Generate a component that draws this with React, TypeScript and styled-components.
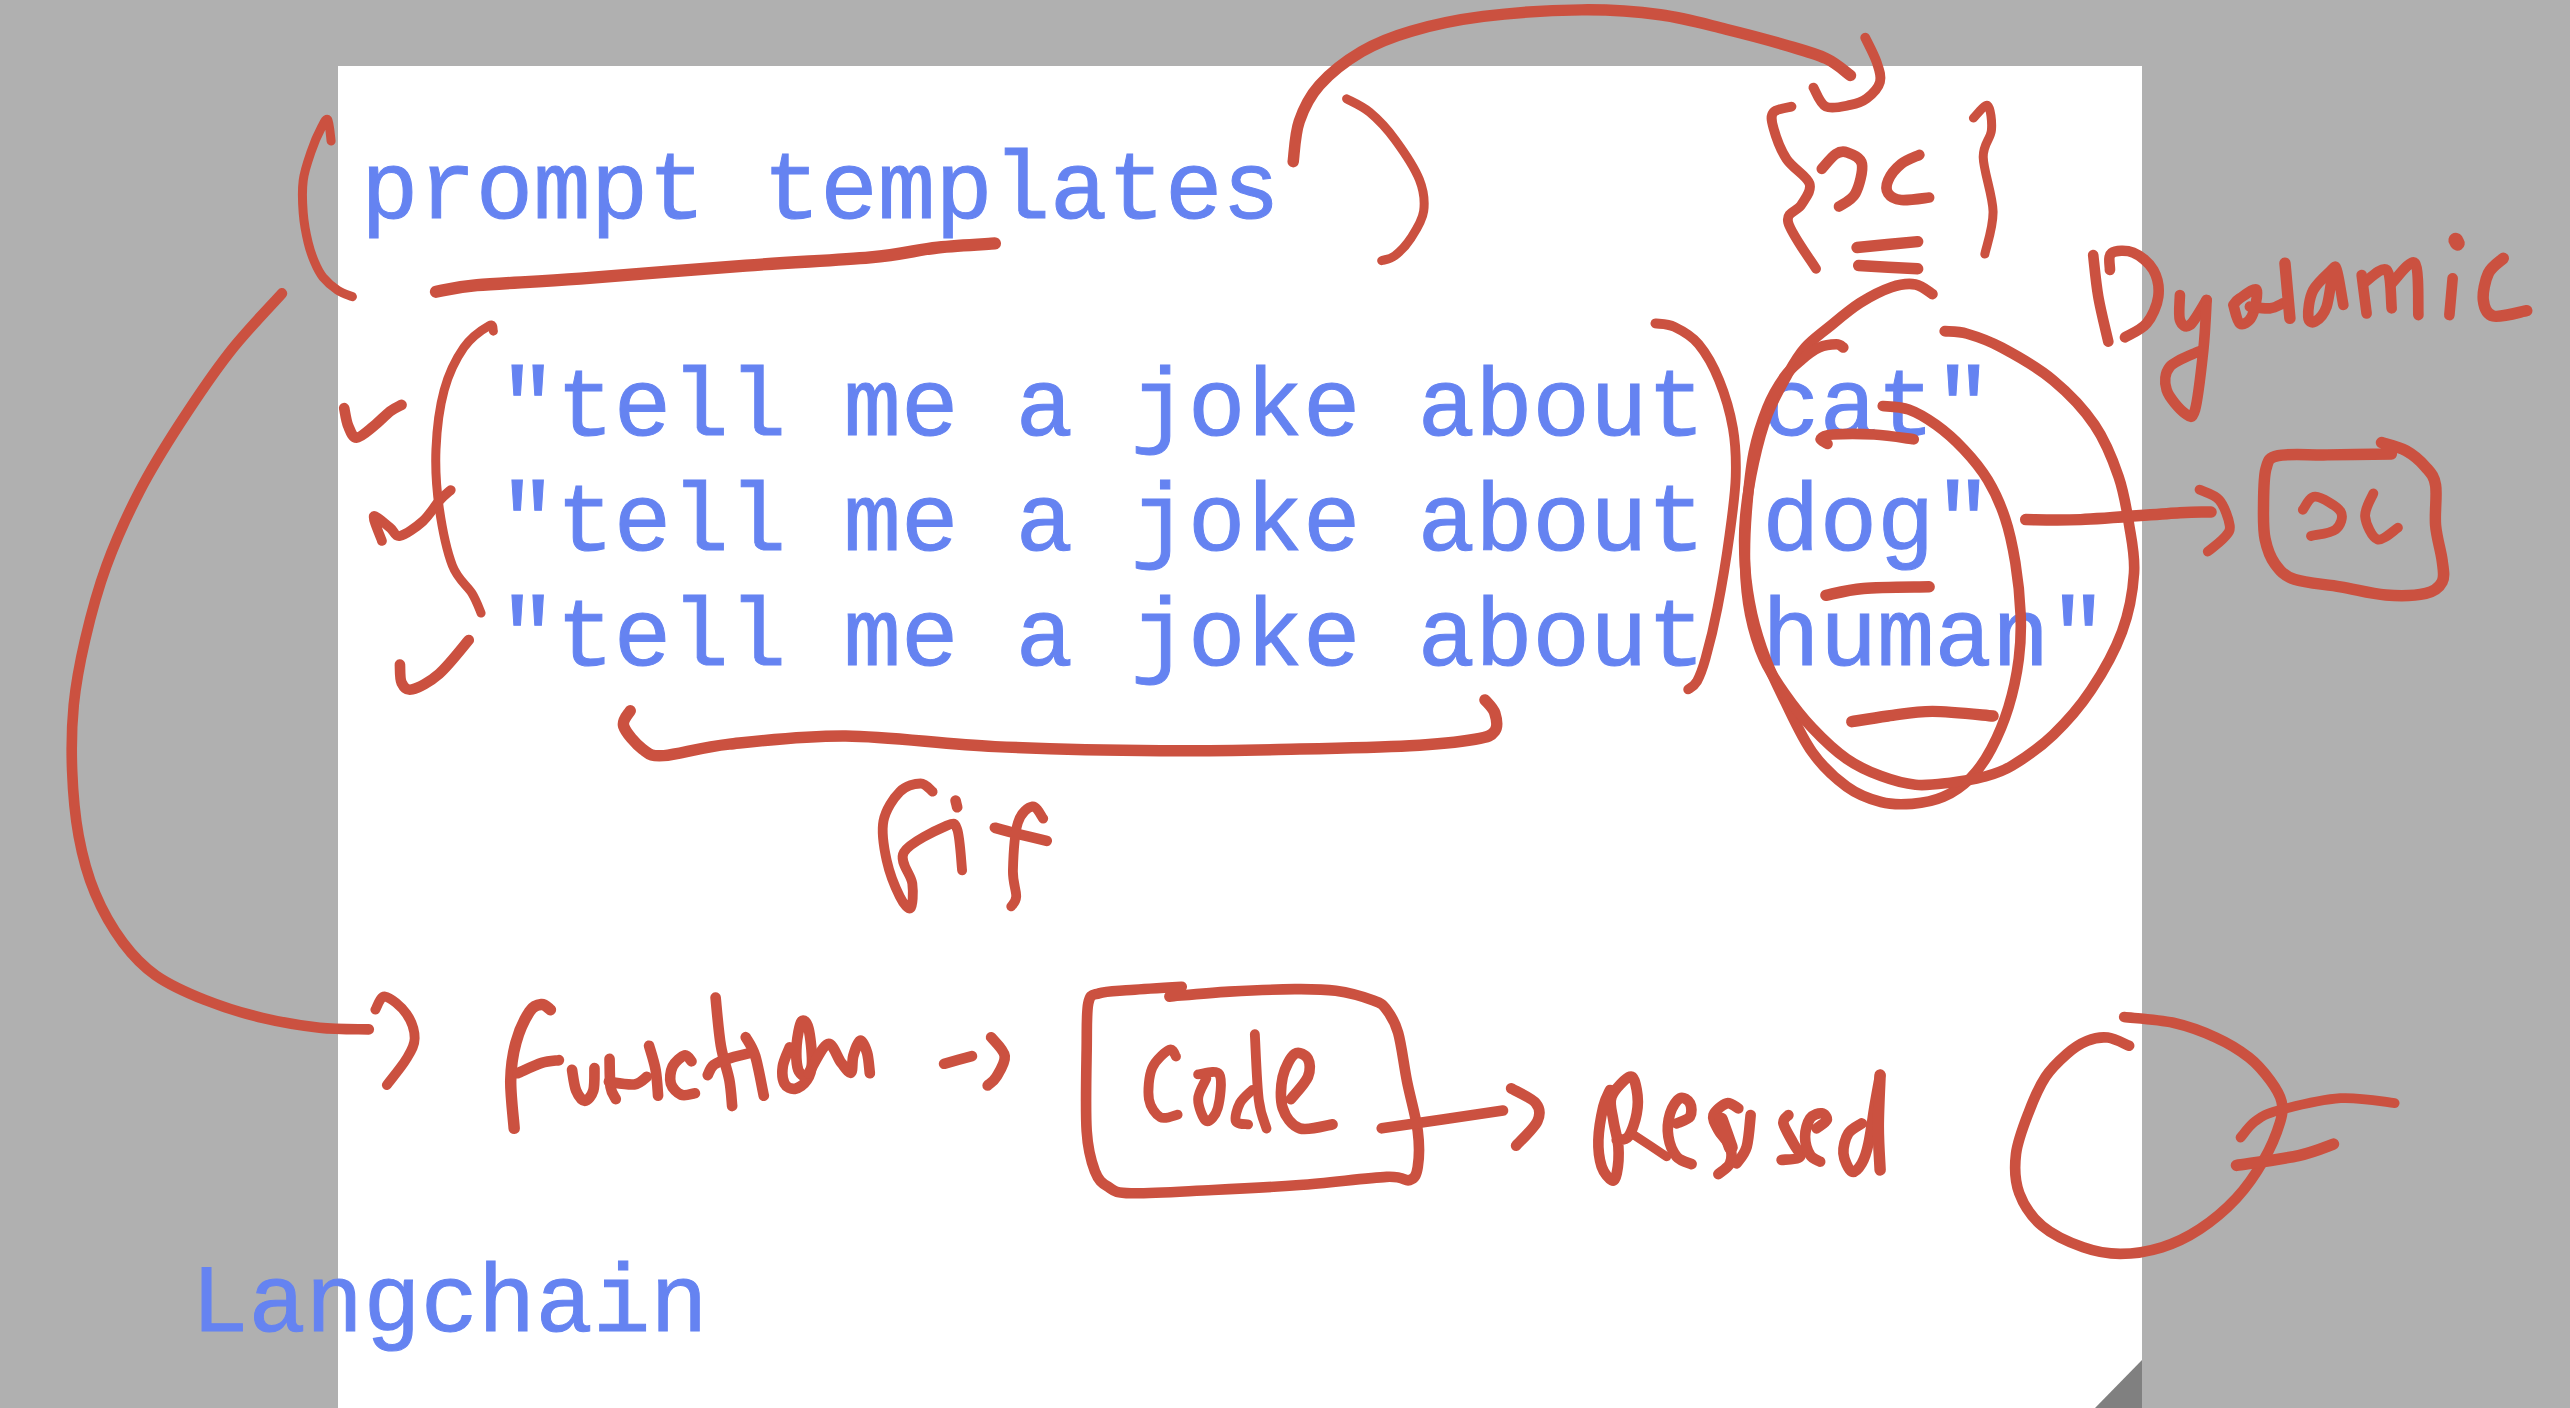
import React from 'react';
import styled, { createGlobalStyle } from 'styled-components';

const GlobalStyle = createGlobalStyle`
  html, body { margin: 0; padding: 0; background: #b0b0b0; }
`;

type Stroke = { w: number; pts: number[] };

// pen strokes, in 1568x859 coordinates
const strokes: Stroke[] = [
  // left paren and underline of the title
  { w: 5.5, pts: [202,86, 200,73, 196,78, 190,92, 185,110, 185,130, 188,148, 192,160, 197,169, 206,177, 215,181] },
  { w: 7.5, pts: [266,178, 291,174, 354,170, 455,162, 531,157, 572,151, 607,148.5] },
  // long arrow on the left
  { w: 6.5, pts: [172,179, 140,215, 110,258, 85,300, 65,345, 52,390, 45,430, 44,470, 48,510, 58,545, 75,575, 95,595, 125,610, 160,621, 195,627, 225,628] },
  { w: 6, pts: [229,616, 235,608, 248,618.5, 253,633.5, 248,646, 236,662] },
  // checks
  { w: 6.5, pts: [210,249, 212.5,260, 217.6,267, 228,260, 238,251, 245,247] },
  { w: 6, pts: [233,330, 228,315, 238,322, 244,327, 258,318, 268,305.5, 275,299] },
  { w: 6.5, pts: [244,405.5, 245,416.5, 251.5,420.6, 268,411, 286,390.5] },
  { w: 5.5, pts: [301,202, 298.5,198.6, 283,212, 271,238, 266,274, 268,310, 276,345, 288,362, 293.5,374] },
  // brace under the jokes
  { w: 7, pts: [384.5,433.6, 380.5,443, 392,457, 405,461, 445,454, 516,449, 607,455.5, 708,458, 793,457, 860,455, 900,451, 912,446, 912,435, 906,427] },
  // Fif
  { w: 6, pts: [569,483, 561.7,478, 549,483, 539,501, 541,525, 549,547, 555.6,554, 556.6,539, 551.5,520, 577,504, 584,506, 587,531] },
  { w: 6.5, pts: [583,488.4, 584,492.5] },
  { w: 6.5, pts: [607,505, 622,509, 638.6,513] },
  { w: 6, pts: [636.5,499.4, 630,492, 621,502, 618,531, 620,547, 617,553] },
  // Function ->
  { w: 7, pts: [335.8,616, 330.5,612.8, 323.2,617, 314.8,636, 311.6,659, 313.7,688.4] },
  { w: 6.5, pts: [315.8,654.8, 330.5,648.5, 341,646.8] },
  { w: 6.5, pts: [349,652.7, 351.5,665.3, 356.8,671.6, 362,665.3, 362.7,651.7] },
  { w: 6.5, pts: [371.9,646, 372.5,663.2, 375.7,670.6] },
  { w: 6.5, pts: [371.5,660, 387,661.6, 394.6,657] },
  { w: 6.5, pts: [396,638, 400,652.7, 401.5,668.5] },
  { w: 6.5, pts: [421.9,647.5, 417.7,643.9, 410.4,650.6, 409.3,661.1, 415.6,667.9, 424,667] },
  { w: 6.5, pts: [436.6,608.6, 439.8,638, 445,659, 446.7,674.8] },
  { w: 6.5, pts: [431.8,655.9, 435.6,649.6, 446,645.4, 458.7,642.2] },
  { w: 6.5, pts: [455,632.8, 460.8,644.3, 466,668.5] },
  { w: 6.5, pts: [481.8,639, 477.6,650.6, 478.6,661, 485,664.3, 492.3,659, 495.4,648.5, 493.3,627.5, 489,623.3, 486,638, 487,652.7, 492.3,658] },
  { w: 6.5, pts: [493.3,654.8, 505,637, 513.3,648.5, 519.2,654.4, 520.6,644.3, 524.9,634.9, 529,642.2, 530.7,654.8] },
  { w: 6.5, pts: [576,649, 593,644.3] },
  { w: 6.5, pts: [604.7,632.8, 613,644.3, 607.9,657, 602.6,662.2] },
  // code box
  { w: 6.5, pts: [721,602, 690,604, 670.5,606, 664,612, 663,640, 663,690, 668,714.5, 676,724, 690,728, 740,726, 793,723, 846,718, 860,720, 865,712, 865,690, 858.5,660, 853,630, 846,616, 838,610.4, 815,604.5, 790,603.5, 750,605, 713.5,608] },
  { w: 6, pts: [717.5,644.6, 713.5,640.5, 703,651.5, 701,670.6, 708,681.6, 718.5,680] },
  { w: 6, pts: [731,655.5, 744,655.5, 743,676, 736,684, 731,670.6, 736,658] },
  { w: 6, pts: [765.6,631, 768,671, 772.7,688.5] },
  { w: 6, pts: [764,665, 756.5,673, 754,684, 761.5,686] },
  { w: 6.5, pts: [787.6,670.6, 798,657, 798,646, 790,643, 782.6,657, 782.6,676, 793,688.4, 813,686] },
  { w: 6.5, pts: [843,688.4, 917,677.5] },
  { w: 6.5, pts: [922,664, 937,673, 938,684, 925,699] },
  // Ressed
  { w: 6.5, pts: [982.3,665, 978.2,675.2, 975.2,695.5, 977.2,711.8, 983.3,720, 986.4,715.9, 987.4,699.6, 984.3,683.3, 983.3,669, 994.5,656.9, 998.6,665, 998.6,679.2, 993.5,693.5, 986.4,695.5] },
  { w: 5.5, pts: [995.5,691.5, 1016.9,705.7] },
  { w: 6.5, pts: [1023,685.4, 1031.1,681.3, 1031.1,673.1, 1025,670, 1019,679.2, 1017.9,693.5, 1023,705.7, 1032.1,710.2] },
  { w: 6.5, pts: [1060.6,676.2, 1053.5,673.1, 1045.4,680.3, 1048.4,689.4, 1055.5,699.6, 1055.5,709.8, 1048.4,716.3] },
  { w: 6.5, pts: [1068.1,680.3, 1065.7,699.6, 1059.6,709.8] },
  { w: 8.5, pts: [1050,683, 1056,700] },
  { w: 6.5, pts: [1091.1,680.3, 1088.1,685.4, 1094.2,697.6, 1098.2,705.7, 1087,707.7] },
  { w: 6.5, pts: [1108.4,688.4, 1114.5,683.3, 1111.5,679.2, 1104.4,682.3, 1101.3,693.5, 1104.4,704.7, 1110.5,708.7] },
  { w: 6.5, pts: [1135.9,685.4, 1127.7,691.5, 1124.7,703.7, 1129.8,714.8, 1135.9,709.8, 1140,697.6, 1144,673.1, 1147.1,655.9] },
  { w: 7, pts: [1147.1,655.9, 1146,687.4, 1147.1,713.8] },
  // circle and cross on the bottom right
  { w: 6.5, pts: [1299,638, 1286,633, 1273.4,635, 1261,643, 1248,657, 1238,678, 1230,704, 1232,728, 1246,748, 1271,761, 1293.6,765, 1319,761, 1342,750, 1364.5,731, 1381,708, 1391,685, 1392,672, 1385,659, 1372,645, 1352,633, 1326,624, 1296,620.5] },
  { w: 6, pts: [1367,694, 1376,684, 1390,677.5, 1428,670, 1461,673] },
  { w: 7, pts: [1364.5,711, 1402.4,705, 1423.7,698] },
  // top arc and paren
  { w: 7, pts: [789,98.6, 792.7,74, 805,52, 830.7,31.5, 861,19, 905,10, 965,6, 1013,9, 1053,17.8, 1089,27.4, 1114,35.6, 1129,46] },
  { w: 5.5, pts: [821.6,60.3, 835.7,68.5, 851,85, 866,109.6, 868.6,128.8, 861,145, 851,156, 843,159] },
  // {x} =
  { w: 6, pts: [1138,23, 1145,38, 1147,50, 1139,60, 1129,64, 1114,65, 1106.4,53.4] },
  { w: 6, pts: [1093,65, 1082,68.5, 1082,78, 1090,97, 1104,112, 1099,125, 1091,135.6, 1108,164] },
  { w: 6.5, pts: [1111.5,103, 1120,94, 1127,93, 1136,100, 1132,118, 1122,126] },
  { w: 6.5, pts: [1171,94.5, 1160,100, 1152,110, 1152,118, 1160,122, 1177,120.5] },
  { w: 5.5, pts: [1204,72, 1212.7,64.4, 1215,79.5, 1210,96, 1216,129, 1211,155] },
  { w: 7, pts: [1133,151, 1170,147.4] },
  { w: 7, pts: [1134,162, 1170,164] },
  // rings around the words
  { w: 6.5, pts: [1179,179.4, 1168.7,173.5, 1154,175.2, 1135,184.7, 1116,199.4, 1101.4,212, 1091,227.7, 1078.3,253, 1070,282.4, 1064.7,316, 1064.7,345.4, 1069,374.8, 1077.3,402, 1088.8,427.3, 1105.6,458.8, 1126.7,479.9, 1147.7,489.3, 1166.6,490.4, 1185.5,486.2, 1202.3,474.6, 1215,456.7, 1225.4,431.5, 1231.7,402, 1232.8,374.8, 1229.6,343.3, 1223.3,316, 1212.8,292.9, 1198,274, 1181.3,259.2, 1164.5,249.8, 1148.7,247.7] },
  { w: 6.5, pts: [1124.6,212, 1120.4,210, 1109.9,212, 1099.3,219.3, 1088.8,229.8, 1078.3,248.7, 1070,276, 1065.7,311.8, 1064.7,345.4, 1067.8,374.8, 1076.2,402, 1088.8,423, 1105.6,444, 1126.7,463, 1147.7,473.5, 1168.7,478.8, 1190,477.5, 1210,474, 1227.5,467.2, 1252.7,448.3, 1275.8,421, 1294.7,385.3, 1302,349.6, 1299,320.2, 1292.6,290.8, 1277.9,259.2, 1252.7,232, 1221.2,212, 1200.2,203.6, 1186.5,202] },
  { w: 6, pts: [1010,197.3, 1021.6,199.4, 1036.3,209.9, 1048.9,232, 1057.3,261.3, 1059,290.8, 1055.2,326.5, 1047.9,370.6, 1040.5,402, 1035.3,415.8, 1030,420.6] },
  { w: 6.5, pts: [1115,270.8, 1110.9,267.7, 1118.3,265.1, 1143.5,265.1, 1167.6,268] },
  { w: 7, pts: [1114,363.2, 1137,359, 1177,358] },
  { w: 7, pts: [1129.8,440.3, 1151.9,436.8, 1179,434, 1216,436.8] },
  // arrow to the boxed x
  { w: 7, pts: [1235.9,317, 1269.5,317, 1330,312.8, 1349,312.4] },
  { w: 6, pts: [1342,298.7, 1354,305, 1360.4,320.6, 1357,328, 1347,336.5] },
  { w: 7, pts: [1459,277, 1420,277.5, 1390,278, 1382.5,286, 1381,310, 1382,329, 1388,344, 1400,353.5, 1428,358, 1455.6,363, 1480,362, 1490,355, 1490,342, 1486,320.6, 1486,296, 1480,285, 1468,275, 1453,270] },
  { w: 6, pts: [1405,311, 1412.6,303, 1428,312, 1425,323, 1410,327] },
  { w: 6, pts: [1448,301, 1443,315, 1450.5,329, 1463,322] },
  // Dynamic
  { w: 6.5, pts: [1277.1,155.6, 1280.2,181, 1286.3,208.4] },
  { w: 6.5, pts: [1287.3,164.7, 1288.3,154.5, 1301.5,154.1, 1313.8,164.7, 1316.8,181, 1309.7,197.3, 1296.5,205.8] },
  { w: 6.5, pts: [1330,180, 1330,195.2, 1336.1,198.3, 1346.3,183] },
  { w: 6.5, pts: [1346.3,183, 1344.3,213.5, 1339.2,250.1, 1333.1,252.2, 1321.9,237.9, 1323.9,223.7, 1341.2,214.5] },
  { w: 6.5, pts: [1362.6,186, 1366.6,197.3, 1373.8,193.2, 1376.8,176.9, 1366.6,182, 1362.6,186] },
  { w: 6.5, pts: [1372.7,187.1, 1384.9,188.1, 1393,185] },
  { w: 7, pts: [1394.1,160.6, 1397.1,194.2] },
  { w: 6.5, pts: [1424.6,162.7, 1411.4,176.9, 1408.3,193.2, 1412.4,196.2, 1419.5,187.1, 1424.6,162.7, 1429.7,186] },
  { w: 6.5, pts: [1440.9,167.8, 1443.9,191.2] },
  { w: 6.5, pts: [1441.9,172.8, 1456.1,164.7, 1459.2,188.1] },
  { w: 6.5, pts: [1459.2,172.8, 1473.4,160.6, 1475.5,192.2] },
  { w: 6.5, pts: [1496.4,169.8, 1494.4,192.2] },
  { w: 9, pts: [1498.3,146.5, 1499.3,148.4] },
  { w: 7, pts: [1527.3,157.6, 1518.2,166.7, 1515.1,183, 1521.2,192.8, 1541.6,189.5] },
];

// catmull-rom through the sampled pen points
const toPath = (pts: number[]) => {
  const p: [number, number][] = [];
  for (let i = 0; i < pts.length; i += 2) p.push([pts[i], pts[i + 1]]);
  let d = `M${p[0][0]} ${p[0][1]}`;
  for (let i = 0; i < p.length - 1; i++) {
    const a = p[i - 1] || p[i];
    const b = p[i];
    const c = p[i + 1];
    const e = p[i + 2] || c;
    const c1x = b[0] + (c[0] - a[0]) / 6;
    const c1y = b[1] + (c[1] - a[1]) / 6;
    const c2x = c[0] - (e[0] - b[0]) / 6;
    const c2y = c[1] - (e[1] - b[1]) / 6;
    d += `C${c1x.toFixed(1)} ${c1y.toFixed(1)} ${c2x.toFixed(1)} ${c2y.toFixed(1)} ${c[0]} ${c[1]}`;
  }
  return d;
};

const jokes = ['cat', 'dog', 'human'];

const App = () => (
  <Stage>
    <GlobalStyle />
    <Sheet>
      <Title>prompt templates</Title>
      <JokeList>
        {jokes.map((subject) => (
          <Joke key={subject}>{`"tell me a joke about ${subject}"`}</Joke>
        ))}
      </JokeList>
      <Footer>Langchain</Footer>
    </Sheet>
    <Ink viewBox="0 0 1568 859" role="img" aria-label="Handwritten notes: Dynamic, Fif, Function to code to Ressed">
      {strokes.map((s, i) => (
        <path key={i} d={toPath(s.pts)} strokeWidth={s.w} />
      ))}
    </Ink>
  </Stage>
);

const Stage = styled.div`
  position: relative;
  width: 2570px;
  height: 1408px;
  overflow: hidden;
  background: #b0b0b0;
  padding: 66px 428px 0 338px;
  box-sizing: border-box;
`;

const Sheet = styled.div`
  position: relative;
  height: 100%;
  background: #fff;
  padding-top: 69px;
  box-sizing: border-box;
  font-family: 'Liberation Mono', 'DejaVu Sans Mono', monospace;
  font-size: 95.7px;
  line-height: 115px;
  color: #6583f1;
  -webkit-text-stroke: 1px #6583f1;
  white-space: pre;

  /* folded corner */
  &::after {
    content: '';
    position: absolute;
    right: 0;
    bottom: 0;
    width: 47px;
    height: 48px;
    background: #808080;
    clip-path: polygon(100% 0, 100% 100%, 0 100%);
  }
`;

const Title = styled.div`
  margin-left: 23px;
`;

const JokeList = styled.div`
  margin: 102px 0 0 161px;
`;

const Joke = styled.div``;

const Footer = styled.div`
  margin: 551px 0 0 -147px;
`;

const Ink = styled.svg`
  position: absolute;
  left: 0;
  top: 0;
  width: 2570px;
  height: 1408px;
  fill: none;
  stroke: #cb5140;
  stroke-linecap: round;
  stroke-linejoin: round;
`;

export default App;
